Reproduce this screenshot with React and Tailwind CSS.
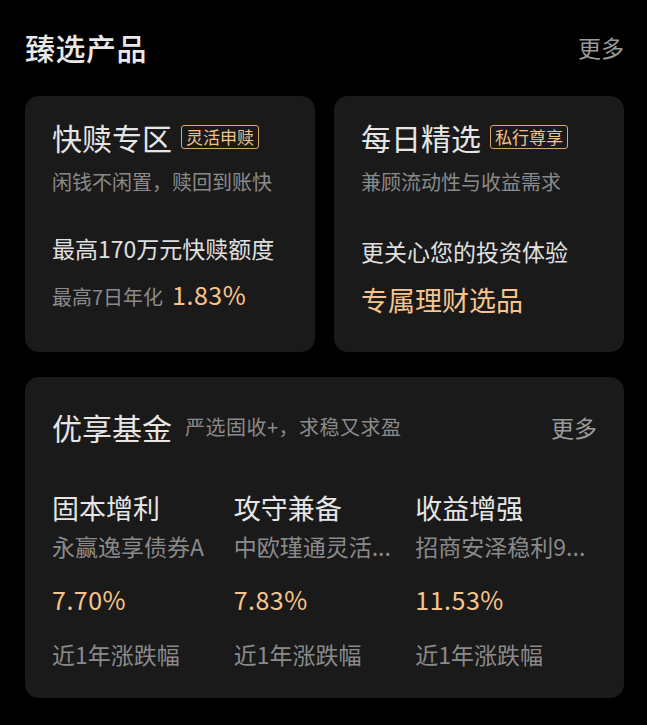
import React from "react";

const font = { fontFamily: '"Noto Sans CJK SC", "Noto Sans", sans-serif' };

const funds = [
  { title: "固本增利", name: "永赢逸享债券A", rate: "7.70%" },
  { title: "攻守兼备", name: "中欧瑾通灵活...", rate: "7.83%" },
  { title: "收益增强", name: "招商安泽稳利9...", rate: "11.53%" },
];

const PromoCard = ({ title, badge, sub, children }) => (
  <div className="flex-1 h-[256px] rounded-[14px] bg-[#1a1a1a] pl-[27px] pt-[21px]">
    <div className="flex items-center">
      <span className="text-[30px] leading-[40px] text-[#e6e6e6]">{title}</span>
      <span className="ml-[9px] rounded-[3px] border border-[#d9a66c] px-[4px] text-[17px] leading-[22px] text-[#f2c28c]">
        {badge}
      </span>
    </div>
    <div className="mt-[11px] text-[20px] leading-[28px] text-[#8a8a8a]">{sub}</div>
    {children}
  </div>
);

const App = () => {
  return (
    <div className="min-h-screen bg-black pl-[25px] pr-[23px] pt-[27px]" style={font}>
      <div className="flex items-center justify-between">
        <h1 className="text-[30px] leading-[40px] font-medium tracking-[0.5px] text-[#e8e8e8]">臻选产品</h1>
        <span className="text-[23px] leading-[32px] text-[#9a9a9a]">更多</span>
      </div>

      <div className="mt-[29px] flex gap-[19px]">
        <PromoCard title="快赎专区" badge="灵活申赎" sub="闲钱不闲置，赎回到账快">
          <div className="mt-[36px] text-[23px] leading-[32px] text-[#e0e0e0]">最高170万元快赎额度</div>
          <div className="mt-[12px] flex items-baseline leading-[36px]">
            <span className="text-[20px] text-[#8a8a8a]">最高7日年化</span>
            <span className="ml-[9px] text-[25px] tracking-[0.5px] text-[#f7c48d]">1.83%</span>
          </div>
        </PromoCard>
        <PromoCard title="每日精选" badge="私行尊享" sub="兼顾流动性与收益需求">
          <div className="mt-[39px] text-[23px] leading-[32px] text-[#e0e0e0]">更关心您的投资体验</div>
          <div className="mt-[15px] text-[27px] leading-[36px] text-[#f7c48d]">专属理财选品</div>
        </PromoCard>
      </div>

      <div className="mt-[25px] h-[321px] rounded-[14px] bg-[#1a1a1a] pl-[27px] pr-[27px] pt-[30px]">
        <div className="flex items-center justify-between">
          <div className="flex items-center">
            <span className="text-[30px] leading-[40px] text-[#e6e6e6]">优享基金</span>
            <span className="ml-[13px] text-[20px] leading-[28px] tracking-[0.5px] text-[#8a8a8a]">严选固收+，求稳又求盈</span>
          </div>
          <span className="text-[23px] leading-[32px] text-[#9a9a9a]">更多</span>
        </div>

        <div className="mt-[43px] grid grid-cols-3">
          {funds.map((f) => (
            <div key={f.title} className="flex flex-col">
              <span className="text-[27px] leading-[36px] text-[#e6e6e6]">{f.title}</span>
              <span className="mt-[5px] text-[23px] leading-[30px] text-[#8a8a8a]">{f.name}</span>
              <span className="mt-[20px] text-[25px] leading-[36px] tracking-[0.5px] text-[#f7c48d]">{f.rate}</span>
              <span className="mt-[21px] text-[23px] leading-[32px] text-[#8a8a8a]">近1年涨跌幅</span>
            </div>
          ))}
        </div>
      </div>
    </div>
  );
};

export default App;
